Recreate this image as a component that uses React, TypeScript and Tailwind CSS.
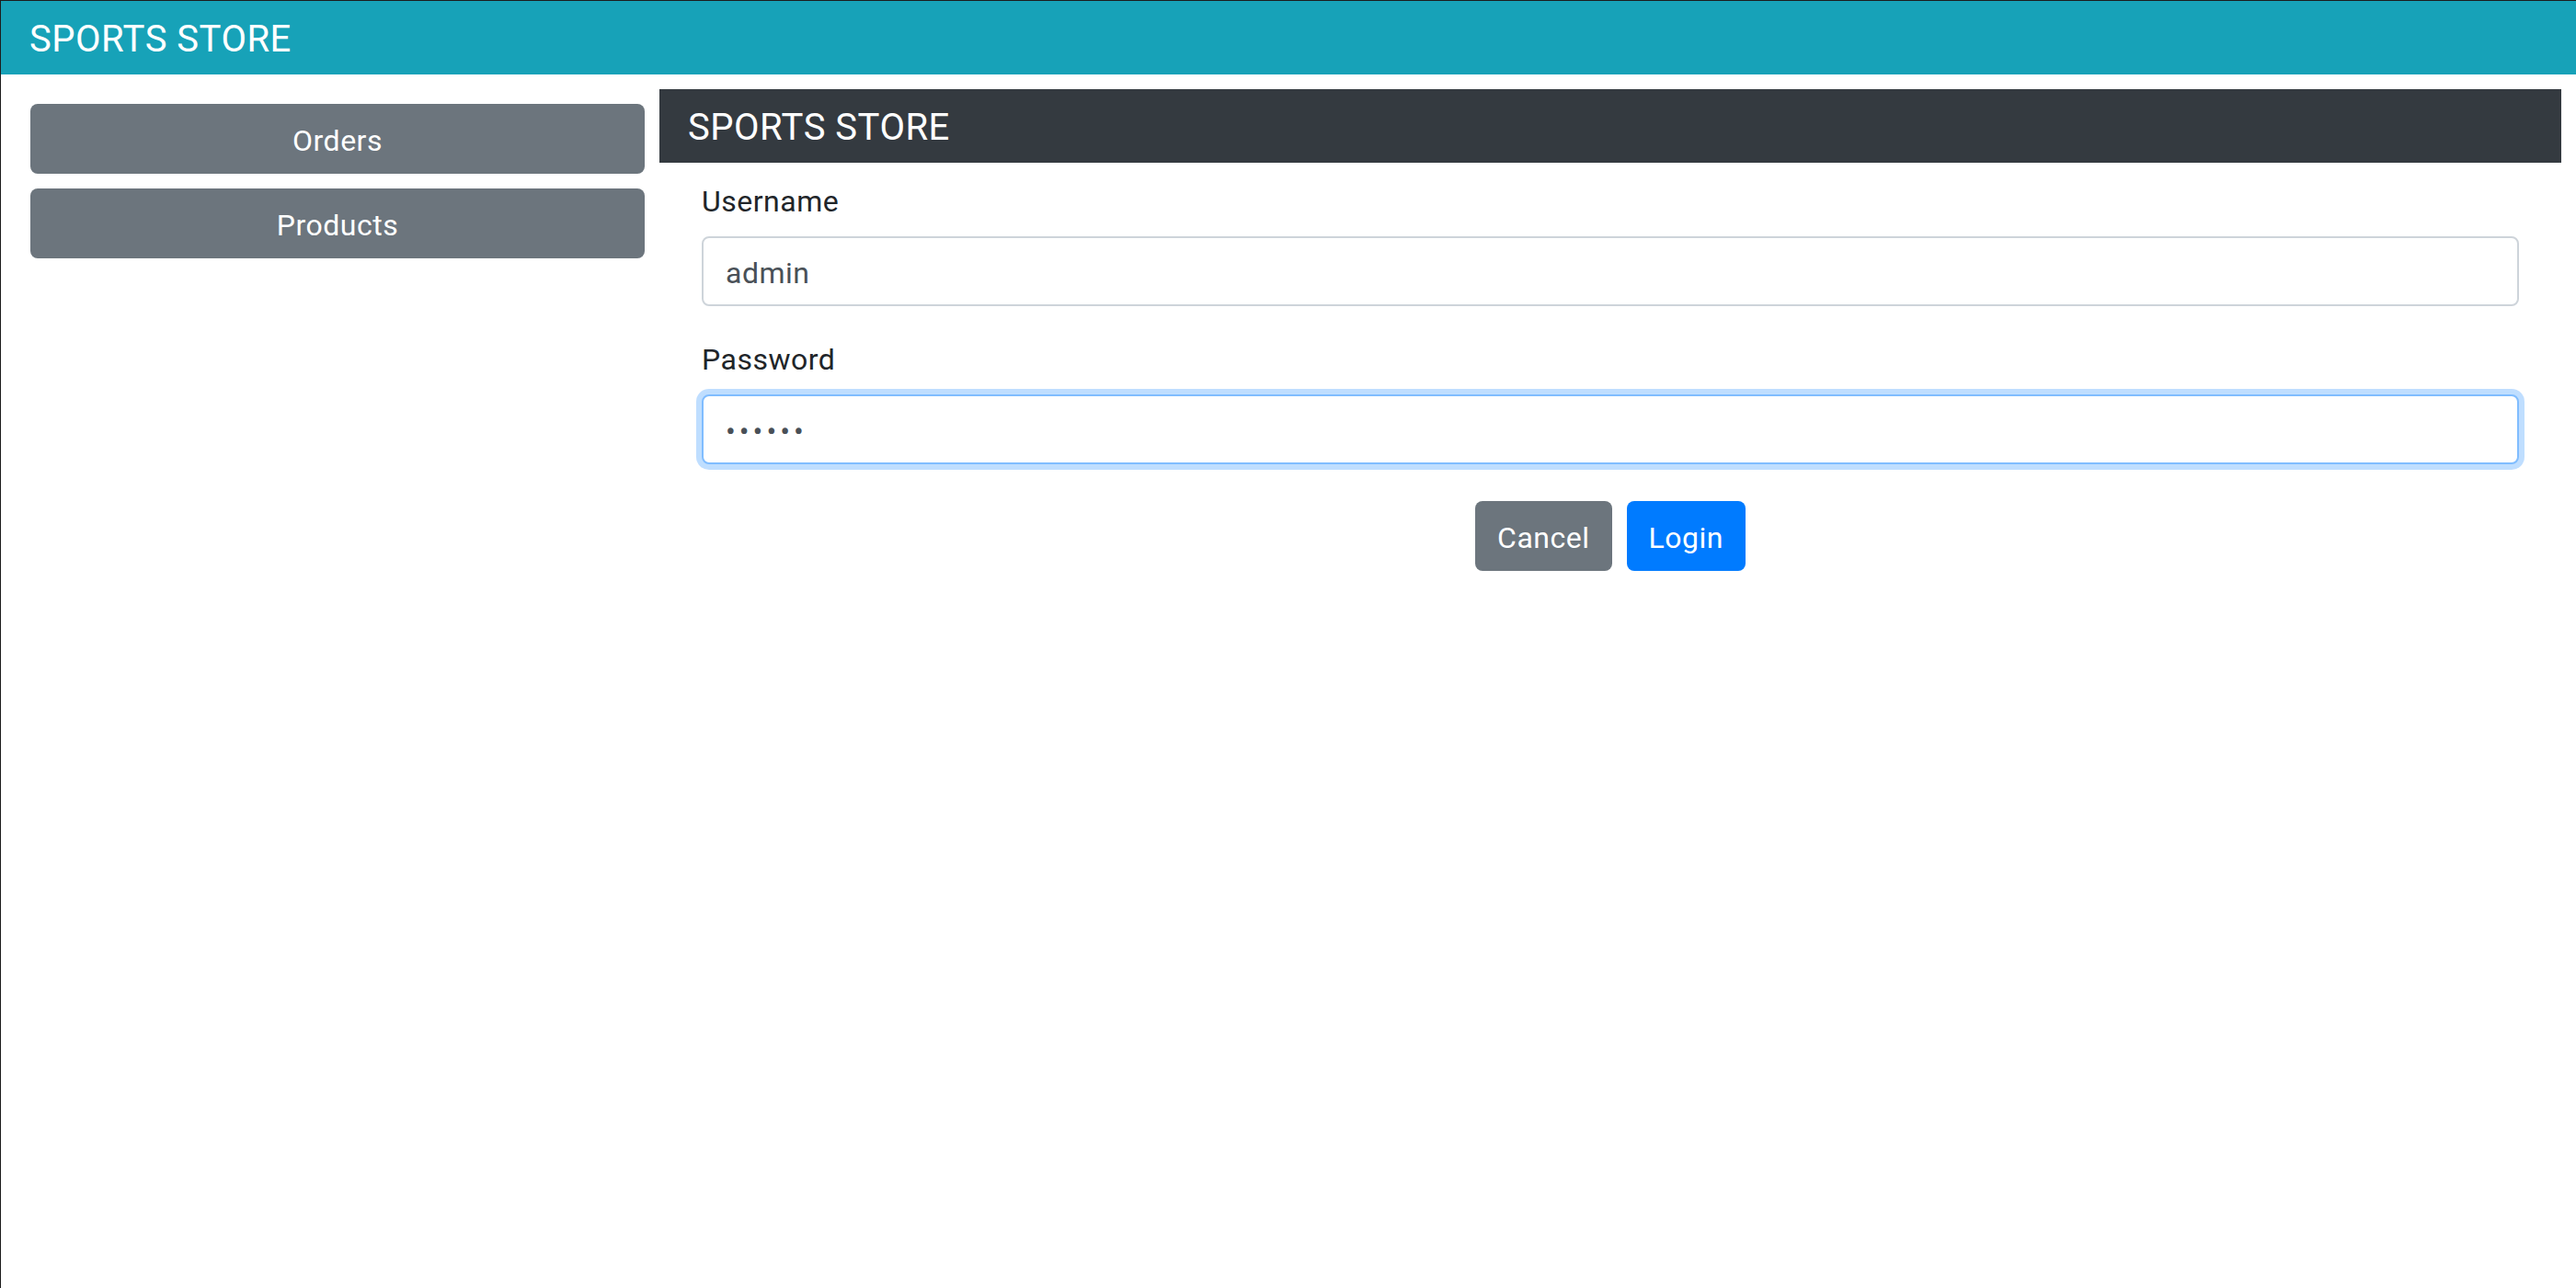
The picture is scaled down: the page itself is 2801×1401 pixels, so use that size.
import React from "react";

const sideItems = ["Orders", "Products"];

function SideButton({ label }: { label: string }) {
  return (
    <button
      type="button"
      className="h-[76px] w-full rounded-lg bg-[#6c757d] pt-[4px] text-[32px] leading-[48px] text-white"
    >
      {label}
    </button>
  );
}

function Field({
  label,
  type,
  value,
  focused,
}: {
  label: string;
  type: string;
  value: string;
  focused?: boolean;
}) {
  return (
    <div className="mb-8">
      <label className="mb-[14px] block pt-[2px] text-[32px] leading-[48px] text-[#212529]">{label}</label>
      <input
        type={type}
        defaultValue={value}
        className={
          focused
            ? "block h-[76px] w-full rounded-lg border-2 border-[#80bdff] bg-white px-6 pt-[3px] text-[32px] tracking-[4px] text-[#495057] shadow-[0_0_0_6px_rgba(0,123,255,0.25)] outline-none"
            : "block h-[76px] w-full rounded-lg border-2 border-[#ced4da] bg-white px-6 pt-[3px] text-[32px] text-[#495057] outline-none"
        }
      />
    </div>
  );
}

export default function App() {
  return (
    <div className="min-h-screen border-l border-t border-[#1c1c1c] bg-white font-['Roboto',sans-serif] tracking-[0.5px]">
      <div className="flex h-[80px] items-center bg-[#17a2b8] pl-[31px] pt-[4px] text-[40px] text-white">
        SPORTS STORE
      </div>

      <div className="flex gap-4 pl-8 pr-4 pt-4">
        <div className="flex w-[668px] shrink-0 flex-col gap-4 pt-4">
          {sideItems.map((item) => (
            <SideButton key={item} label={item} />
          ))}
        </div>

        <div className="flex-1">
          <div className="flex h-[80px] items-center bg-[#343a40] pl-[31px] pt-[4px] text-[40px] text-white">
            SPORTS STORE
          </div>
          <form className="px-[46px] pt-4" onSubmit={(e) => e.preventDefault()}>
            <Field label="Username" type="text" value="admin" />
            <Field label="Password" type="password" value="secret" focused />
            <div className="flex justify-center">
              <button
                type="button"
                className="m-2 h-[76px] rounded-lg bg-[#6c757d] px-6 pt-[4px] text-[32px] leading-[48px] text-white"
              >
                Cancel
              </button>
              <button
                type="submit"
                className="m-2 h-[76px] rounded-lg bg-[#007bff] px-6 pt-[4px] text-[32px] leading-[48px] text-white"
              >
                Login
              </button>
            </div>
          </form>
        </div>
      </div>
    </div>
  );
}
